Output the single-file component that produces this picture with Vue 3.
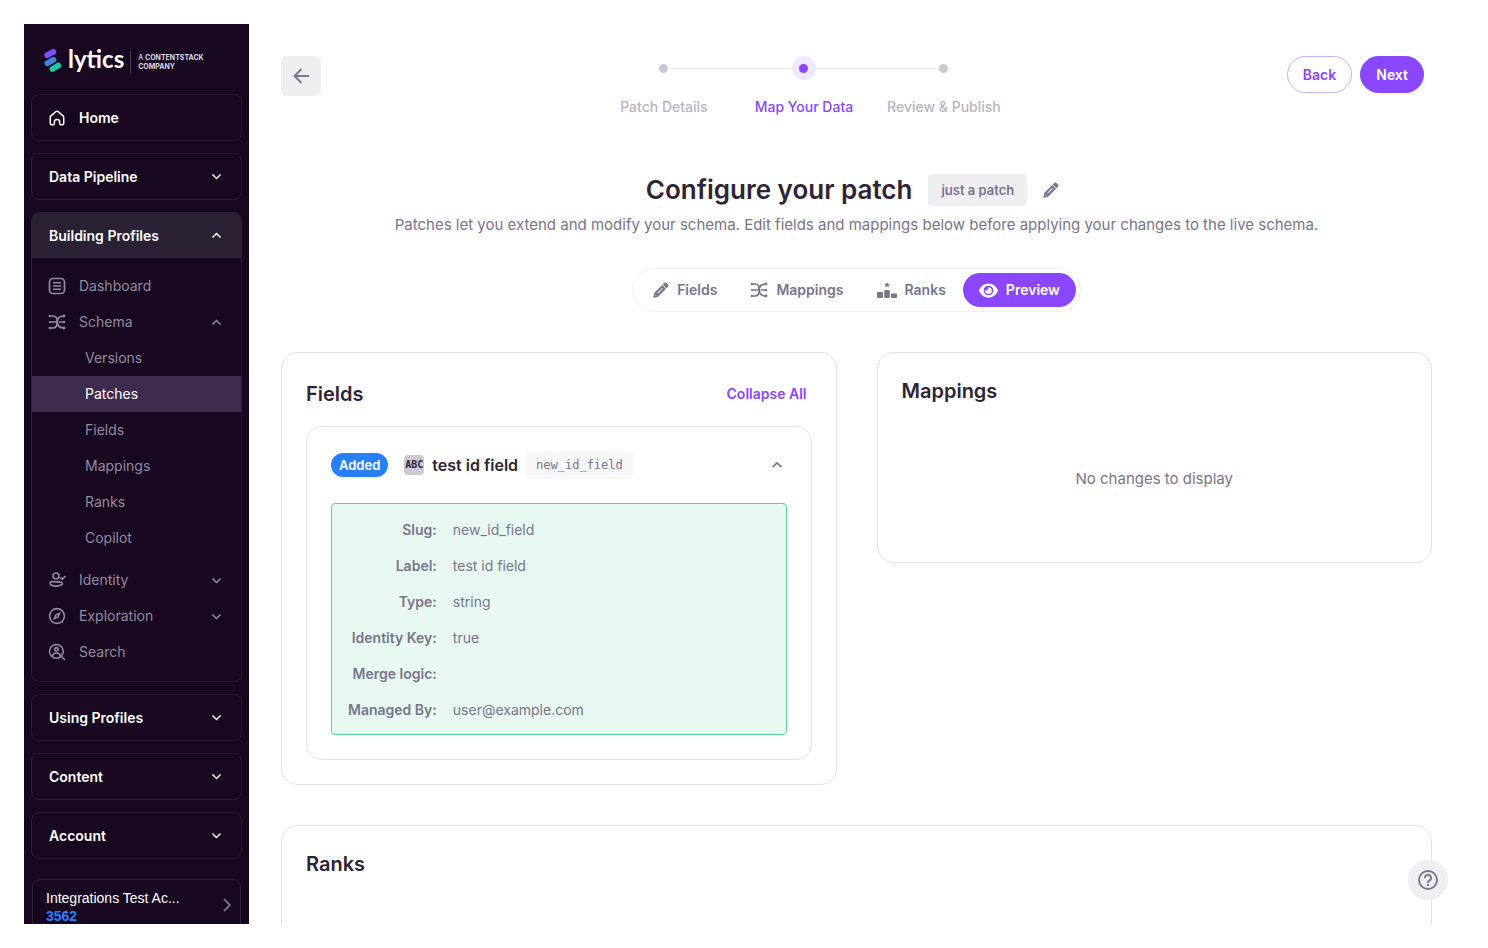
<script setup>
import { ref } from 'vue'

const subItems = ['Versions', 'Patches', 'Fields', 'Mappings', 'Ranks', 'Copilot']
const lowerSections = ['Using Profiles', 'Content', 'Account']
const steps = ['Patch Details', 'Map Your Data', 'Review & Publish']
const activeStep = 1
const tabs = ['Fields', 'Mappings', 'Ranks', 'Preview']
const activeTab = ref('Preview')
const details = [
  { label: 'Slug:', value: 'new_id_field' },
  { label: 'Label:', value: 'test id field' },
  { label: 'Type:', value: 'string' },
  { label: 'Identity Key:', value: 'true' },
  { label: 'Merge logic:', value: '' },
  { label: 'Managed By:', value: 'user@example.com' },
]
</script>

<template>
  <svg class="defs" width="0" height="0" aria-hidden="true">
    <symbol id="i-down" viewBox="0 0 10 10"><path d="M1.3 3.2 5 6.8 8.7 3.2" fill="none" stroke="currentColor" stroke-width="1.4" /></symbol>
    <symbol id="i-up" viewBox="0 0 10 10"><path d="M1.3 6.8 5 3.2 8.7 6.8" fill="none" stroke="currentColor" stroke-width="1.4" /></symbol>
    <symbol id="i-nodes" viewBox="0 0 18 18">
      <g fill="none" stroke="currentColor" stroke-width="1.7">
        <path d="M2 3H5C8.500 3 9.300 5.500 9.300 9S10.500 15 16 15" />
        <path d="M2 15H5C8.500 15 9.300 12.500 9.300 9S10.500 3 16 3" />
        <path d="M2 9H9M11 9H16" />
      </g>
      <g fill="currentColor">
        <circle cx="1.800" cy="3" r="1.200" /><circle cx="1.800" cy="9" r="1" /><circle cx="1.800" cy="15" r="1.200" />
        <circle cx="16" cy="3" r="1.400" /><circle cx="16" cy="9" r="1.200" /><circle cx="16" cy="15" r="1.400" />
      </g>
    </symbol>
    <symbol id="i-pencil" viewBox="0 0 16 16">
      <path fill="currentColor" d="M11 1.300Q12.400 0 13.800 1.200L15 2.400Q16 3.700 14.800 5L13.500 6.300 9.700 2.500Z" />
      <path fill="currentColor" fill-rule="evenodd" d="M9.200 3 13 6.800 5.600 14.200Q5 14.800 4.200 15L.600 15.800Q0 15.900.200 15.300L1.100 11.800Q1.300 10.900 1.900 10.300ZM9.100 6 4.200 10.900 4.900 11.600 9.800 6.700ZM1.900 12.900 3.100 14.100 3.500 13.900 2.100 12.500Z" />
    </symbol>
    <symbol id="i-podium" viewBox="0 0 20 16">
      <g fill="currentColor">
        <path d="M10 0 10.900 2H13L11.400 3.300 12 5.500 10 4.300 8 5.500 8.600 3.300 7 2H9.100Z" />
        <rect x="0" y="10" width="6" height="6" rx="1" />
        <rect x="7.200" y="8" width="5.600" height="8" rx="1" />
        <rect x="14" y="11.500" width="6" height="4.500" rx="1" />
      </g>
    </symbol>
    <symbol id="i-eye" viewBox="0 0 18 14">
      <path fill="currentColor" fill-rule="evenodd" d="M9 .300C4.800.300 1.700 3 .100 6.500Q-.100 7 .100 7.500C1.700 11 4.800 13.700 9 13.700S16.300 11 17.900 7.500Q18.100 7 17.900 6.500C16.300 3 13.200.300 9 .300ZM9 2.400A4.600 4.600 0 1 1 9 11.600 4.600 4.600 0 0 1 9 2.400Z" />
      <path fill="currentColor" d="M8.700 3.900A3.100 3.100 0 1 1 5.900 6.700 2.200 2.200 0 0 0 8.700 3.900Z" />
    </symbol>
  </svg>

  <div class="frame">
    <aside class="sidebar">
      <a class="logo" href="#" aria-label="lytics, a Contentstack company">
        <svg class="mark" viewBox="0 0 18 24" aria-hidden="true">
          <g fill="none" stroke-width="5.800" stroke-linecap="round">
            <path d="M3.200 7.100 9.300 3.900" stroke="#7c4dff" />
            <path d="M3.400 15.300 9.500 11.800" stroke="#3f86d8" />
            <path d="M8.500 21 14.400 17.600" stroke="#1fc7a4" />
          </g>
        </svg>
        <span class="brand">lytics</span>
        <span class="tagline">A <b>CONTENTSTACK</b><br /><b>COMPANY</b></span>
      </a>

      <nav class="menu">
        <a class="box head" href="#">
          <svg class="icon home" viewBox="0 0 16 16" aria-hidden="true">
            <path fill="none" stroke="currentColor" stroke-width="1.500" stroke-linejoin="round" d="M1.300 7.300Q1.300 6.500 1.900 5.900L6.700 1.700Q8 .700 9.300 1.700L14.100 5.900Q14.700 6.500 14.700 7.300V13.500Q14.700 14.700 13.500 14.700H11.800Q10.600 14.700 10.600 13.500V11.800Q10.600 9.600 8 9.600T5.400 11.800V13.500Q5.400 14.700 4.200 14.700H2.500Q1.300 14.700 1.300 13.500Z" />
          </svg>
          <span>Home</span>
        </a>
        <button class="box head" type="button"><span>Data Pipeline</span><svg class="chev"><use href="#i-down" /></svg></button>

        <section class="box group">
          <button class="head open" type="button"><span>Building Profiles</span><svg class="chev"><use href="#i-up" /></svg></button>
          <div class="items">
            <a class="item" href="#">
              <svg class="icon" viewBox="0 0 18 18" aria-hidden="true">
                <g fill="none" stroke="currentColor" stroke-width="1.700">
                  <rect x="1.500" y="1.500" width="15" height="15" rx="3.500" />
                  <path d="M5 5.700H13M5 9H13M5 12.300H13" stroke-width="1.500" />
                </g>
              </svg>
              <span>Dashboard</span>
            </a>
            <button class="item" type="button"><svg class="icon"><use href="#i-nodes" /></svg><span>Schema</span><svg class="chev"><use href="#i-up" /></svg></button>
            <div class="sub">
              <a v-for="s in subItems" :key="s" href="#" class="subitem" :class="{ current: s === 'Patches' }">{{ s }}</a>
            </div>
            <button class="item" type="button">
              <svg class="icon" viewBox="0 0 18 18" aria-hidden="true">
                <g fill="none" stroke="currentColor" stroke-width="1.700" stroke-linecap="round">
                  <circle cx="8" cy="5" r="3" />
                  <path d="M12.800 6.800 14.300 8.300 17 5.500" />
                  <path d="M3.300 10.500C1.500 11.500 2 13.200 3.600 14.200 6.500 15.600 11.500 15.300 13.500 13.700 14.800 12.800 14.600 11.600 13.300 11.200 10.500 10.600 5.500 11.300 3.300 10.500Z" />
                </g>
              </svg>
              <span>Identity</span><svg class="chev"><use href="#i-down" /></svg>
            </button>
            <button class="item" type="button">
              <svg class="icon" viewBox="0 0 18 18" aria-hidden="true">
                <circle cx="9" cy="9" r="7.400" fill="none" stroke="currentColor" stroke-width="1.600" />
                <path fill="currentColor" fill-rule="evenodd" d="M12.900 5.100 10.700 10.600 5.100 12.900 7.300 7.300ZM8.300 8.300V9.700H9.700V8.300Z" />
              </svg>
              <span>Exploration</span><svg class="chev"><use href="#i-down" /></svg>
            </button>
            <a class="item" href="#">
              <svg class="icon" viewBox="0 0 18 18" aria-hidden="true">
                <g fill="none" stroke="currentColor" stroke-width="1.600">
                  <circle cx="8.400" cy="8.400" r="6.900" />
                  <circle cx="8.400" cy="6.300" r="1.700" />
                  <path d="M4.500 13.200V12.500Q5.300 10 8.400 10T12.300 12.500V13.200M13.500 13.500 17 17" />
                </g>
              </svg>
              <span>Search</span>
            </a>
          </div>
        </section>

        <button v-for="s in lowerSections" :key="s" class="box head" type="button"><span>{{ s }}</span><svg class="chev"><use href="#i-down" /></svg></button>
      </nav>

      <button class="account" type="button">
        <span class="who"><span class="name">Integrations Test Ac...</span><strong>3562</strong></span>
        <svg class="go" viewBox="0 0 8 14" aria-hidden="true"><path d="M1 1 7 7 1 13" fill="none" stroke="currentColor" stroke-width="1.800" /></svg>
      </button>
    </aside>

    <main class="main">
      <header class="top">
        <button class="back" type="button" aria-label="Go back">
          <svg viewBox="0 0 16 16" aria-hidden="true"><path d="M16 8H1.500M8.500 1 1.500 8 8.500 15" fill="none" stroke="currentColor" stroke-width="1.900" /></svg>
        </button>
        <ol class="stepper">
          <li v-for="(s, i) in steps" :key="s" :class="{ on: i === activeStep }"><span class="halo"><i class="dot"></i></span><span>{{ s }}</span></li>
        </ol>
        <div class="actions">
          <button class="pill" type="button">Back</button>
          <button class="pill solid" type="button">Next</button>
        </div>
      </header>

      <div class="title">
        <h1>Configure your patch</h1>
        <span class="chip">just a patch</span>
        <button class="edit" type="button" aria-label="Edit patch name"><svg><use href="#i-pencil" /></svg></button>
      </div>
      <p class="lead">Patches let you extend and modify your schema. Edit fields and mappings below before applying your changes to the live schema.</p>

      <div class="tabs">
        <button v-for="t in tabs" :key="t" type="button" class="tab" :class="{ active: t === activeTab }" @click="activeTab = t">
          <svg v-if="t === 'Fields'"><use href="#i-pencil" /></svg>
          <svg v-else-if="t === 'Mappings'" class="mid"><use href="#i-nodes" /></svg>
          <svg v-else-if="t === 'Ranks'" class="broad"><use href="#i-podium" /></svg>
          <svg v-else class="eye"><use href="#i-eye" /></svg>
          <span>{{ t }}</span>
        </button>
      </div>

      <div class="cards">
        <section class="card">
          <div class="cardhead">
            <h2>Fields</h2>
            <button class="link" type="button">Collapse All</button>
          </div>
          <article class="card inner">
            <div class="fieldhead">
              <span class="badge">Added</span>
              <span class="abc">ABC</span>
              <h3>test id field</h3>
              <code>new_id_field</code>
              <button class="toggle" type="button" aria-label="Collapse field"><svg><use href="#i-up" /></svg></button>
            </div>
            <dl class="details">
              <template v-for="d in details" :key="d.label">
                <dt>{{ d.label }}</dt>
                <dd>{{ d.value }}</dd>
              </template>
            </dl>
          </article>
        </section>

        <section class="card">
          <h2>Mappings</h2>
          <p class="empty">No changes to display</p>
        </section>

        <section class="card wide">
          <h2>Ranks</h2>
        </section>
      </div>

      <button class="help" type="button" aria-label="Help">
        <svg viewBox="0 0 20 20" aria-hidden="true">
          <circle cx="10" cy="10" r="9" fill="none" stroke="currentColor" stroke-width="1.900" />
          <path d="M7 8A3 3 0 1 1 11.600 10.400Q10 11.500 10 13" fill="none" stroke="currentColor" stroke-width="1.900" />
          <rect x="9" y="14" width="2" height="2" fill="currentColor" />
        </svg>
      </button>
    </main>
  </div>
</template>

<style>
body { margin: 0; background: #fff; }
</style>

<style scoped>
.defs { position: absolute; }
.frame {
  box-sizing: border-box;
  height: 100vh;
  padding: 24px;
  display: flex;
  background: #fff;
  color: #7a748d;
  font-family: Inter, "Liberation Sans", sans-serif;
  font-size: 14px;
  line-height: 20px;
}
button { font: inherit; color: inherit; background: none; border: 0; padding: 0; margin: 0; cursor: pointer; }
a { color: inherit; text-decoration: none; }
h1, h2, h3, p, ol, dl, dd { margin: 0; padding: 0; }
svg { display: block; flex: none; }

.sidebar { box-sizing: border-box; flex: none; width: 225px; padding: 0 7px; background: #170820; overflow: hidden; }
.logo { display: flex; align-items: center; height: 70px; padding-left: 13px; color: #fff; }
.mark { width: 18px; height: 24px; margin-top: 2px; }
.brand { margin: 0 6px; font-family: Lato, sans-serif; font-size: 24px; line-height: 30px; font-weight: 700; }
.tagline { margin-top: 6px; padding: 2px 0 2px 7px; border-left: 1px solid #4a3f55; font-size: 7px; line-height: 9px; font-weight: 500; color: #dcd8e4; white-space: nowrap; }

.menu { display: flex; flex-direction: column; gap: 12px; }
.box { box-sizing: border-box; border: 1px solid #2a1e34; border-radius: 8px; overflow: hidden; flex: none; }
.head { display: flex; align-items: center; justify-content: space-between; width: 100%; height: 47px; padding: 0 19px 0 17px; color: #fff; font-weight: 600; text-align: left; }
.head .home { width: 16px; height: 16px; }
a.head { justify-content: flex-start; gap: 14px; }
.open { height: 45px; background: #2a2134; }
.chev { width: 11px; height: 11px; margin-left: auto; }
.items { display: flex; flex-direction: column; padding: 10px 0 11px; color: #918b9f; }
.item { display: flex; align-items: center; gap: 13px; height: 36px; padding: 0 19px 0 16px; text-align: left; }
.icon { width: 18px; height: 18px; }
.sub { display: flex; flex-direction: column; padding-bottom: 6px; }
.subitem { padding: 8px 0 8px 53px; }
.subitem.current { background: #3d2c50; color: #fff; }

.account { box-sizing: border-box; display: flex; align-items: center; justify-content: space-between; width: calc(100% - 2px); margin: 20px 1px 0; padding: 9px 9px 10px 13px; border: 1px solid #2a1e34; border-radius: 8px; text-align: left; font-family: "Liberation Sans", sans-serif; line-height: 18px; color: #757084; }
.who { display: flex; flex-direction: column; white-space: nowrap; }
.name { color: #fff; }
.who strong { color: #2680ff; }
.go { width: 8px; height: 14px; margin-bottom: 4px; }

.main { box-sizing: border-box; position: relative; flex: 1; min-width: 0; padding: 32px 32px 0; overflow: hidden; }
.top { display: flex; justify-content: space-between; align-items: flex-start; padding-right: 8px; }
.back { display: grid; place-items: center; width: 40px; height: 40px; border-radius: 4px; background: #efeff1; }
.back svg { width: 16px; height: 16px; }
.stepper { display: flex; list-style: none; color: #b7b4c2; font-weight: 500; }
.stepper li { position: relative; display: flex; flex-direction: column; align-items: center; gap: 17px; width: 140px; }
.stepper li + li::before { content: ""; position: absolute; left: -65px; width: 130px; top: 12px; height: 1px; background: #ebebee; }
.stepper .on { color: #8b46ff; }
.halo { position: relative; display: grid; place-items: center; width: 24px; height: 24px; border-radius: 50%; }
.on .halo { background: #f0e8ff; }
.dot { width: 9px; height: 9px; border-radius: 50%; background: #cac8d4; }
.on .dot { background: #8b46ff; }
.actions { display: flex; gap: 8px; }
.pill { padding: 7px 15px; border: 1px solid #c9adff; border-radius: 20px; color: #8b46ff; font-weight: 600; line-height: 21px; }
.solid { background: #8b46ff; border-color: #8b46ff; color: #fff; }

.title { display: flex; justify-content: center; align-items: center; margin-top: 57px; }
h1 { color: #2d2438; font-size: 26px; line-height: 32px; font-weight: 600; }
.chip { margin: 0 8px 0 16px; padding: 6px 13px; border-radius: 4px; background: #efeff1; font-size: 13px; font-weight: 600; }
.edit { padding: 8px; }
.edit svg { width: 16px; height: 16px; }
.lead { margin-top: 7px; text-align: center; font-size: 15px; line-height: 24px; }
.tabs { display: flex; gap: 1px; width: max-content; margin: 31px auto 0; padding: 4px; border: 1px solid #f0f0f2; border-radius: 22px; }
.tab { display: flex; align-items: center; gap: 8px; padding: 7px 16px; border-radius: 17px; font-weight: 600; }
.tab svg { width: 16px; height: 16px; }
.tab svg.mid { width: 18px; height: 18px; }
.tab svg.broad { width: 20px; height: 16px; }
.tab svg.eye { width: 19px; height: 15px; }
.tab.active { background: #8b46ff; color: #fff; }

.cards { display: grid; grid-template-columns: 1fr 1fr; align-items: start; gap: 40px; margin-top: 40px; }
.card { padding: 24px; border: 1px solid #e3e2e7; border-radius: 16px; background: #fff; }
.wide { grid-column: 1 / -1; min-height: 160px; }
h2 { color: #2d2438; font-size: 20px; line-height: 28px; font-weight: 600; }
.cardhead { display: flex; justify-content: space-between; align-items: center; height: 34px; padding-right: 5px; margin-bottom: 15px; }
.link { color: #8b46ff; font-weight: 600; }
.fieldhead { display: flex; align-items: center; height: 28px; margin-bottom: 24px; }
.badge { padding: 2px 8px; border-radius: 12px; background: #2680ff; color: #fff; font-size: 13px; font-weight: 600; }
.abc { margin: 0 8px 0 16px; width: 20px; border-radius: 4px; background: #cbc9d5; color: #2d2438; text-align: center; font: 700 10px/20px "DejaVu Sans Mono", monospace; }
h3 { color: #2d2438; font-size: 16px; line-height: 24px; font-weight: 600; }
code { margin-left: 8px; padding: 4px 10px; border-radius: 4px; background: #f7f7f8; font: 12px/20px "DejaVu Sans Mono", monospace; }
.toggle { margin-left: auto; padding: 4px; }
.toggle svg { width: 12px; height: 12px; }
.details { display: grid; grid-template-columns: auto 1fr; gap: 16px; padding: 16px 16px 14px; border: 1px solid #56d397; border-radius: 4px; background: #e8f9f1; }
dt { text-align: right; font-weight: 600; }
.empty { margin-top: 16px; padding: 47px 0 48px; text-align: center; font-size: 15px; line-height: 22px; }
.help { position: absolute; right: 16px; bottom: 24px; display: grid; place-items: center; width: 40px; height: 40px; border-radius: 50%; background: #efeff1; }
.help svg { width: 20px; height: 20px; }
</style>
